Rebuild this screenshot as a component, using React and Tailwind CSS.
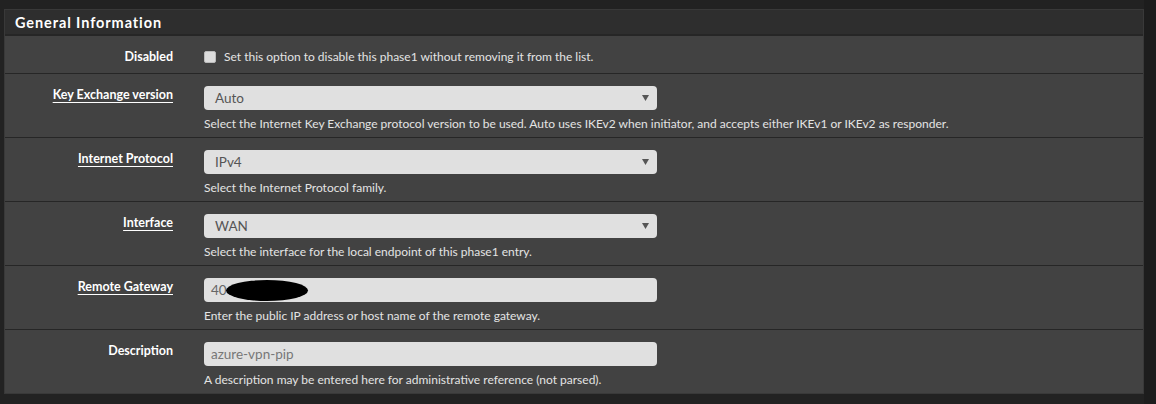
import React from "react";

function Caret() {
  return (
    <svg width="7" height="6" viewBox="0 0 7 6" className="absolute right-[8px] top-[9px]">
      <path d="M0 0 L7 0 L3.5 6 Z" fill="#555" />
    </svg>
  );
}

function Row({ label, underline, children, help, first }) {
  return (
    <div className={`flex border-t border-[#262626] ${first ? "h-[38px] pt-[13px]" : "h-[64px] pt-[12px]"}`}>
      <div
        className={`w-[168px] shrink-0 text-right text-[12.5px] font-bold text-white leading-[16px] ${first ? "pt-0" : "pt-[1px]"}`}
      >
        <span className={underline ? "underline underline-offset-[3px] decoration-1" : ""}>
          {label}
        </span>
      </div>
      <div className="ml-[31px] flex flex-col">
        {children}
        {help && (
          <div className="mt-[6px] text-[12px] leading-[16px] text-[#e4e4e4]">{help}</div>
        )}
      </div>
    </div>
  );
}

function SelectBox({ value }) {
  return (
    <div className="relative w-[453px] h-[24px] rounded-[4px] bg-[#e0e0e0] pl-[11px] text-[13.5px] leading-[24px] text-[#555]">
      {value}
      <Caret />
    </div>
  );
}

export default function App() {
  return (
    <div
      className="w-[1156px] h-[404px] bg-[#222222] flex"
      style={{ fontFamily: "Lato, 'Open Sans', sans-serif" }}
    >
      <div className="w-[1144px] pt-[9px] pl-[4px]">
        <div className="w-[1140px] bg-[#424242] border border-[#393939]">
          <div className="h-[25px] bg-[#2e2e2e] border-b border-[#262626] pl-[10px] text-[14.5px] font-bold tracking-[0.9px] text-white leading-[26px]">
            General Information
          </div>
          <Row label="Disabled" first>
            <div className="flex items-center mt-[2px] h-[12px]">
              <div className="w-[12px] h-[12px] rounded-[2px] bg-[#dcdcdc] border border-[#bbb]" />
              <span className="ml-[8px] text-[12px] leading-[16px] text-[#e4e4e4]">
                Set this option to disable this phase1 without removing it from the list.
              </span>
            </div>
          </Row>
          <Row
            label="Key Exchange version"
            underline
            help="Select the Internet Key Exchange protocol version to be used. Auto uses IKEv2 when initiator, and accepts either IKEv1 or IKEv2 as responder."
          >
            <SelectBox value="Auto" />
          </Row>
          <Row label="Internet Protocol" underline help="Select the Internet Protocol family.">
            <SelectBox value="IPv4" />
          </Row>
          <Row label="Interface" underline help="Select the interface for the local endpoint of this phase1 entry.">
            <SelectBox value="WAN" />
          </Row>
          <Row
            label="Remote Gateway"
            underline
            help="Enter the public IP address or host name of the remote gateway."
          >
            <div className="relative w-[453px] h-[24px] rounded-[4px] bg-[#e0e0e0] pl-[7px] text-[13.5px] leading-[24px] text-[#666]">
              40
              <div className="absolute left-[22px] top-[2px] w-[82px] h-[21px] rounded-[50%] bg-black" />
            </div>
          </Row>
          <Row
            label="Description"
            help="A description may be entered here for administrative reference (not parsed)."
          >
            <div className="w-[453px] h-[24px] rounded-[4px] bg-[#e0e0e0] pl-[7px] text-[13.5px] leading-[24px] text-[#777]">
              azure-vpn-pip
            </div>
          </Row>
        </div>
      </div>
      <div className="flex-1 bg-[#1d1d1d]" />
    </div>
  );
}
